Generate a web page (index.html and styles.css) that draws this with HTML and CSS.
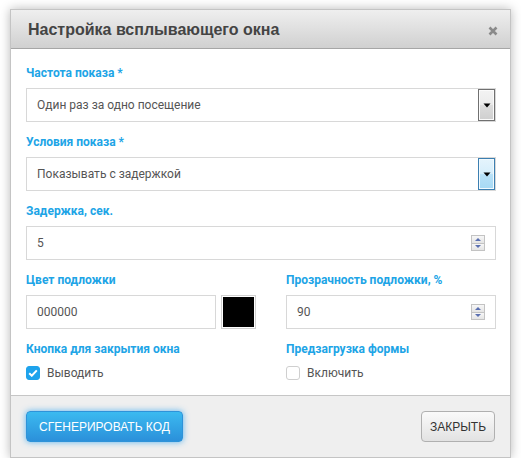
FILE: index.html
```html
<!DOCTYPE html>
<html lang="ru">
<head>
<meta charset="utf-8">
<link rel="stylesheet" href="styles.css">
</head>
<body>
<div class="dialog">
  <div class="header">
    <div class="title">Настройка всплывающего окна</div>
    <div class="close"><svg width="10" height="10" viewBox="0 0 10 10"><path d="M1.5 1.5l7 7M8.5 1.5l-7 7" stroke="#8a8a8a" stroke-width="2.6" fill="none"/></svg></div>
  </div>
  <div class="content">
    <div class="group">
      <div class="label">Частота показа *</div>
      <div class="field select">
        <span class="value">Один раз за одно посещение</span>
        <span class="drop"><svg width="8" height="5" viewBox="0 0 8 5"><path d="M0.5 0.5h7L4 4.5z" fill="#000"/></svg></span>
      </div>
    </div>
    <div class="group">
      <div class="label">Условия показа *</div>
      <div class="field select">
        <span class="value">Показывать с задержкой</span>
        <span class="drop active"><svg width="8" height="5" viewBox="0 0 8 5"><path d="M0.5 0.5h7L4 4.5z" fill="#000"/></svg></span>
      </div>
    </div>
    <div class="group">
      <div class="label">Задержка, сек.</div>
      <div class="field number">
        <span class="value">5</span>
        <span class="spin"><span class="up"></span><span class="down"></span></span>
      </div>
    </div>
    <div class="group cols">
      <div>
        <div class="label">Цвет подложки</div>
        <div class="color-row">
          <div class="field color-input"><span class="value">000000</span></div>
          <div class="swatch"></div>
        </div>
      </div>
      <div>
        <div class="label">Прозрачность подложки, %</div>
        <div class="field number">
          <span class="value">90</span>
          <span class="spin"><span class="up"></span><span class="down"></span></span>
        </div>
      </div>
    </div>
    <div class="cols last">
      <div>
        <div class="label">Кнопка для закрытия окна</div>
        <div class="check-row">
          <span class="checkbox checked"><svg width="10" height="8" viewBox="0 0 10 8"><path d="M1.2 4.2l2.6 2.5L8.8 1.4" fill="none" stroke="#fff" stroke-width="2"/></svg></span>
          <span class="check-text">Выводить</span>
        </div>
      </div>
      <div>
        <div class="label">Предзагрузка формы</div>
        <div class="check-row">
          <span class="checkbox"></span>
          <span class="check-text">Включить</span>
        </div>
      </div>
    </div>
  </div>
  <div class="footer">
    <button class="btn primary">СГЕНЕРИРОВАТЬ КОД</button>
    <button class="btn plain">ЗАКРЫТЬ</button>
  </div>
</div>
</body>
</html>
```
FILE: styles.css
```css
html, body {
  margin: 0;
  padding: 0;
  background: #ffffff;
}
body {
  padding: 9px 0 0 10px;
  font-family: Roboto, "Liberation Sans", Arial, sans-serif;
}
.dialog {
  width: 499px;
  height: 447px;
  border: 1px solid #c4c4c4;
  background: #fff;
  box-shadow: 0 0 10px rgba(0,0,0,0.28);
  display: flex;
  flex-direction: column;
}
.header {
  height: 38px;
  flex: none;
  border-bottom: 1px solid #a6a6a6;
  background: linear-gradient(#efefef, #d0d0d0);
  display: flex;
  align-items: center;
  justify-content: space-between;
  padding: 0 12px 0 17px;
}
.title {
  font-family: "Liberation Sans", Arial, sans-serif;
  font-weight: bold;
  font-size: 16px;
  color: #444;
  padding-top: 2px;
}
.close {
  display: flex;
  padding-top: 4px;
}
.content {
  flex: 1;
  padding: 16px 14px 0 15px;
}
.group {
  margin-bottom: 12px;
}
.label {
  font-weight: bold;
  font-size: 12px;
  line-height: 16px;
  color: #20a4e6;
  margin-bottom: 7px;
}
.field {
  height: 32px;
  border: 1px solid #d8d8d8;
  display: flex;
  align-items: center;
  font-size: 12px;
  color: #555;
  background: #fff;
}
.value {
  flex: 1;
  padding-left: 10px;
}
.drop {
  width: 15px;
  height: 30px;
  border: 1px solid #707070;
  background: linear-gradient(#f3f3f3 0%, #ebebeb 48%, #dcdcdc 52%, #cfcfcf 100%);
  display: flex;
  align-items: center;
  justify-content: center;
  box-shadow: inset 0 0 0 1px #fbfbfb;
}
.drop.active {
  border-color: #3c7fb1;
  background: linear-gradient(#e5f4fc 0%, #d6eefb 48%, #b8e1f7 52%, #a6d9f4 100%);
  box-shadow: inset 0 0 0 1px #f2fafe;
}
.spin {
  width: 14px;
  height: 16px;
  display: flex;
  flex-direction: column;
  margin-right: 10px;
  border: 1px solid #c3c3c3;
  box-sizing: border-box;
}
.spin span {
  flex: 1;
  background: linear-gradient(#f7f7f7, #e4e4e4);
  display: flex;
  align-items: center;
  justify-content: center;
}
.spin .up {
  border-bottom: 1px solid #c3c3c3;
}
.spin .up::after {
  content: "";
  border-left: 3px solid transparent;
  border-right: 3px solid transparent;
  border-bottom: 3px solid #5a6fb0;
}
.spin .down::after {
  content: "";
  border-left: 3px solid transparent;
  border-right: 3px solid transparent;
  border-top: 3px solid #5a6fb0;
}
.cols {
  display: grid;
  grid-template-columns: 230px 210px;
  column-gap: 30px;
}
.color-row {
  display: flex;
  gap: 5px;
}
.color-input {
  width: 188px;
}
.swatch {
  width: 33px;
  height: 32px;
  border: 1px solid #d0d0d0;
  background: #000;
  box-shadow: inset 0 0 0 1px #fff;
}
.check-row {
  display: flex;
  align-items: center;
  margin-top: 9px;
  height: 14px;
}
.checkbox {
  width: 14px;
  height: 14px;
  box-sizing: border-box;
  border-radius: 3px;
  border: 1px solid #cfcfcf;
  background: #fff;
  display: flex;
  align-items: center;
  justify-content: center;
}
.checkbox.checked {
  background: #1ea3ec;
  border-color: #1ea3ec;
}
.check-text {
  margin-left: 7px;
  font-size: 12px;
  color: #555;
}
.footer {
  height: 61px;
  flex: none;
  border-top: 1px solid #c6c6c6;
  background: #efefef;
  display: flex;
  align-items: center;
  justify-content: space-between;
  padding: 0 15px 0 15px;
}
.btn {
  font-family: "Liberation Sans", Arial, sans-serif;
  font-size: 12px;
  height: 31px;
  border-radius: 4px;
  padding: 0;
  cursor: pointer;
}
.primary {
  width: 157px;
  color: #fff;
  border: 1px solid #2e93d9;
  background: linear-gradient(#3bbaf0, #2b90da);
  box-shadow: 0 0 6px rgba(40,160,240,0.75);
}
.plain {
  width: 74px;
  color: #333;
  border: 1px solid #b0b0b0;
  background: linear-gradient(#fafafa, #e2e2e2);
}
```
